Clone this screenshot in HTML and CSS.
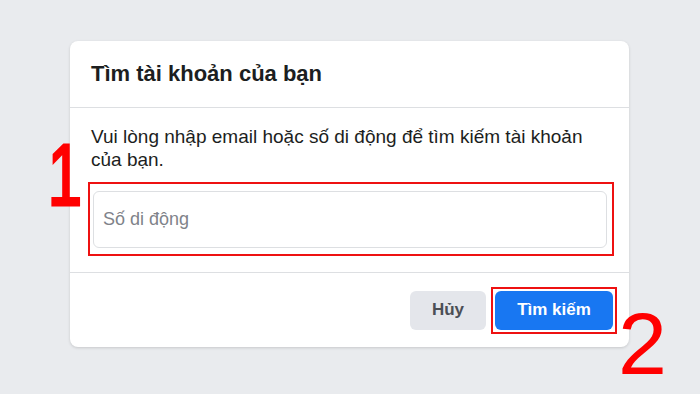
FILE: index.html
```html
<!DOCTYPE html>
<html lang="vi">
<head>
  <meta charset="UTF-8" />
  <meta name="viewport" content="width=device-width, initial-scale=1.0" />
  <title>Tìm tài khoản của bạn</title>
  <link rel="stylesheet" href="styles.css">
</head>
<body>

  <div class="card">
    <div class="card-header">
      <h2>Tìm tài khoản của bạn</h2>
    </div>

    <div class="card-body">
      <p class="desc">Vui lòng nhập email hoặc số di động để tìm kiếm tài khoản của bạn.</p>
      <div class="mark-box input-mark">
        <input class="field" type="text" placeholder="Số di động" />
      </div>
    </div>

    <div class="card-footer">
      <button class="btn btn-cancel">Hủy</button>
      <div class="mark-box btn-mark">
        <button class="btn btn-primary">Tìm kiếm</button>
      </div>
    </div>
  </div>

  <span class="step step-1">1</span>
  <span class="step step-2">2</span>

</body>
</html>
```

FILE: styles.css
```css
html, body {
  margin: 0;
  height: 100%;
}
body {
  background: #e9ebee;
  font-family: 'Liberation Sans', Arial, Helvetica, sans-serif;
  color: #1c1e21;
  overflow: hidden;
}
.card {
  width: 559px;
  margin: 41px 0 0 70px;
  background: #fff;
  border-radius: 8px;
  box-shadow: 0 1px 3px rgba(0, 0, 0, 0.15);
}
.card-header {
  height: 66px;
  display: flex;
  align-items: center;
  padding-left: 21px;
  border-bottom: 1px solid #dddfe2;
}
.card-header h2 {
  margin: 0;
  font-size: 22px;
  font-weight: bold;
  color: #1c1e21;
}
.card-body {
  padding: 17px 15px 16px 18px;
}
.desc {
  margin: 0 20px 11px 3px;
  font-size: 19px;
  line-height: 23px;
  color: #1c1e21;
}
.mark-box {
  border: 2px solid #ee1111;
}
.input-mark {
  padding: 7px 5px 6px 3px;
}
.field {
  display: block;
  box-sizing: border-box;
  width: 100%;
  height: 57px;
  border: 1px solid #dddfe2;
  border-radius: 6px;
  padding: 0 9px;
  font-family: inherit;
  font-size: 18px;
  color: #1c1e21;
  outline: none;
}
.field::placeholder {
  color: #7f838a;
}
.card-footer {
  height: 75px;
  box-sizing: border-box;
  border-top: 1px solid #dddfe2;
  display: flex;
  justify-content: flex-end;
  align-items: center;
  padding-right: 12px;
}
.btn {
  height: 39px;
  border: none;
  border-radius: 6px;
  font-family: inherit;
  font-size: 17px;
  font-weight: bold;
  cursor: pointer;
}
.btn-cancel {
  width: 76px;
  background: #e4e6eb;
  color: #4b4f56;
  margin-right: 5px;
}
.btn-mark {
  padding: 2px;
}
.btn-primary {
  display: block;
  width: 118px;
  background: #1877f2;
  color: #fff;
}
.step {
  position: absolute;
  font-size: 88px;
  line-height: 1;
  color: #ff0000;
}
.step-1 {
  left: 34px;
  top: 131px;
  -webkit-text-stroke: 3px #ff0000;
  transform: scaleX(0.7);
  transform-origin: 46px 0;
}
.step-2 {
  left: 618px;
  top: 300px;
}
```
